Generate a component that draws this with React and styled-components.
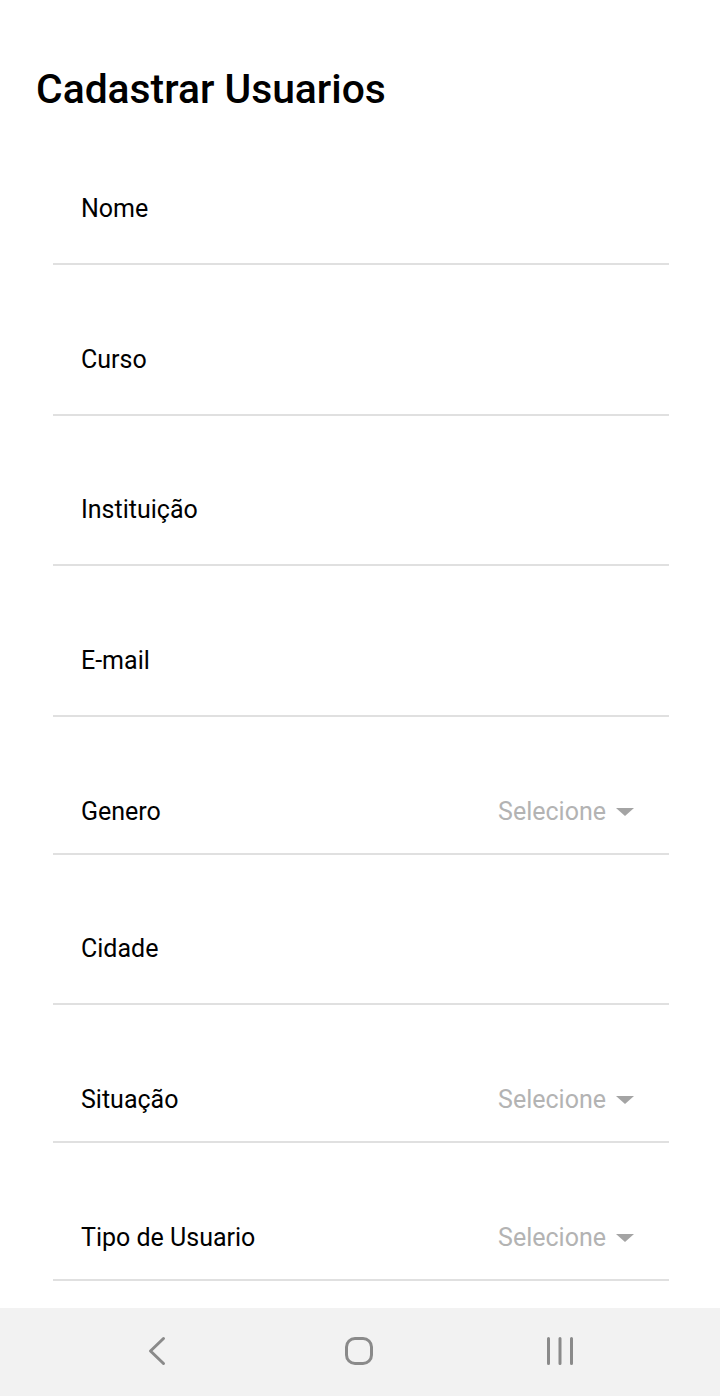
import React from "react";
import styled, { createGlobalStyle } from "styled-components";

const Global = createGlobalStyle`
  html, body { margin: 0; padding: 0; background: #fff; }
  body { font-family: Roboto, "Noto Sans", sans-serif; color: #000; }
`;

const Screen = styled.div`
  width: 720px;
  height: 1396px;
  display: flex;
  flex-direction: column;
  background: #fff;
  overflow: hidden;
`;

const Content = styled.div`
  flex: 1;
  display: flex;
  flex-direction: column;
`;

const Title = styled.h1`
  margin: 0;
  height: 114px;
  box-sizing: border-box;
  padding: 66px 0 0 36px;
  font-size: 40.8px;
  line-height: 46px;
  font-weight: 500;
`;

const Form = styled.div`
  display: flex;
  flex-direction: column;
  margin: 0 51px 0 53px;
`;

const Row = styled.div`
  display: flex;
  align-items: flex-start;
  justify-content: space-between;
  box-sizing: border-box;
  height: ${(p) => p.$h}px;
  padding: ${(p) => p.$top}px 35px 0 28px;
  border-bottom: 2px solid #e0e0e0;
`;

const Label = styled.span`
  font-size: 25px;
  line-height: 30px;
  height: 30px;
`;

const Select = styled.div`
  display: flex;
  align-items: center;
  gap: 10px;
  color: #b3b3b3;
  font-size: 25px;
  line-height: 30px;
`;

const Nav = styled.div`
  height: 88px;
  background: #f2f2f2;
  display: flex;
  align-items: center;
  justify-content: center;
  gap: 161.5px;
  padding-right: 3px;
  box-sizing: border-box;
`;

const NavButton = styled.div`
  display: flex;
  align-items: center;
  justify-content: center;
  width: 40px;
  height: 40px;
  margin-top: -2px;
`;

const Arrow = () => (
  <svg width="18" height="8" viewBox="0 0 18 8">
    <path d="M0 0 L18 0 L9 8 Z" fill="#a4a4a4" />
  </svg>
);

const fields = [
  { label: "Nome", type: "text" },
  { label: "Curso", type: "text" },
  { label: "Instituição", type: "text" },
  { label: "E-mail", type: "text" },
  { label: "Genero", type: "select" },
  { label: "Cidade", type: "text" },
  { label: "Situação", type: "select" },
  { label: "Tipo de Usuario", type: "select" },
];

export default function App() {
  return (
    <>
      <Global />
      <Screen>
        <Content>
          <Title>Cadastrar Usuarios</Title>
          <Form>
            {fields.map((f, i) => {
              const isSelect = f.type === "select";
              const h = i === 0 ? 151 : isSelect ? 138 : 150.5;
              const top = i === 0 ? 80 : isSelect ? 80 : 79.5;
              return (
                <Row key={f.label} $h={h} $top={top}>
                  <Label>{f.label}</Label>
                  {isSelect && (
                    <Select>
                      Selecione
                      <Arrow />
                    </Select>
                  )}
                </Row>
              );
            })}
          </Form>
        </Content>
        <Nav>
          <NavButton>
            <svg width="40" height="40" viewBox="0 0 40 40">
              <path d="M26.5 7.5 L13.5 20 L26.5 32.5" fill="none" stroke="#8a8a8a" strokeWidth="3" strokeLinecap="round" strokeLinejoin="round" />
            </svg>
          </NavButton>
          <NavButton>
            <svg width="40" height="40" viewBox="0 0 40 40">
              <rect x="7.5" y="7.5" width="25" height="25" rx="8.5" fill="none" stroke="#8a8a8a" strokeWidth="3" />
            </svg>
          </NavButton>
          <NavButton>
            <svg width="40" height="40" viewBox="0 0 40 40">
              <path d="M8.5 7.5 V32.5 M20 7.5 V32.5 M31.5 7.5 V32.5" stroke="#8a8a8a" strokeWidth="3" strokeLinecap="round" />
            </svg>
          </NavButton>
        </Nav>
      </Screen>
    </>
  );
}
